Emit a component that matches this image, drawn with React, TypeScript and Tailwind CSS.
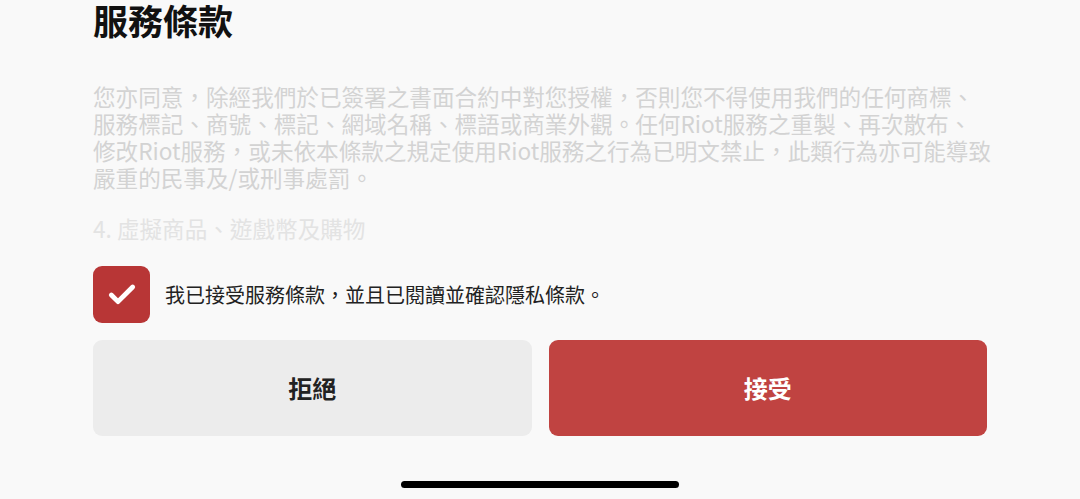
import { Fragment } from "react";
import { Check } from "lucide-react";

const font = { fontFamily: '"Noto Sans CJK TC", "Noto Sans", sans-serif' };

const lines = [
  "您亦同意，除經我們於已簽署之書面合約中對您授權，否則您不得使用我們的任何商標、",
  "服務標記、商號、標記、網域名稱、標語或商業外觀。任何Riot服務之重製、再次散布、",
  "修改Riot服務，或未依本條款之規定使用Riot服務之行為已明文禁止，此類行為亦可能導致",
  "嚴重的民事及/或刑事處罰。",
];

export default function App() {
  return (
    <div style={font} className="flex h-[499px] w-[1080px] flex-col overflow-hidden bg-[#f9f9f9] px-[93px]">
      <h1 className="pt-[1px] text-[35px] font-bold leading-[37px] text-[#111]">服務條款</h1>
      <div className="mt-[45px] text-[22.6px] leading-[27px] text-[#d3d3d3]">
        <p className="whitespace-nowrap">
          {lines.map((l, i) => (
            <Fragment key={l}>
              {l}
              {i < lines.length - 1 && <br />}
            </Fragment>
          ))}
        </p>
        <p className="mt-[24px] text-[#e3e3e3]">4. 虛擬商品、遊戲幣及購物</p>
      </div>
      <label className="mt-[24px] flex items-center gap-[15px]">
        <span className="flex h-[57px] w-[57px] shrink-0 items-center justify-center rounded-[9px] bg-[#b83636]">
          <Check size={32} strokeWidth={3.6} className="text-white" />
        </span>
        <span className="text-[20px] text-[#222]">我已接受服務條款，並且已閱讀並確認隱私條款。</span>
      </label>
      <div className="mt-[17px] flex gap-[17px]">
        <button className="h-[96px] flex-1 rounded-[9px] bg-[#ececec] text-[24px] font-bold text-[#222]">拒絕</button>
        <button className="h-[96px] flex-1 rounded-[9px] bg-[#c04341] text-[24px] font-bold text-white">接受</button>
      </div>
      <div className="mt-[45px] flex justify-center">
        <div className="h-[7px] w-[278px] rounded-full bg-black" />
      </div>
    </div>
  );
}
